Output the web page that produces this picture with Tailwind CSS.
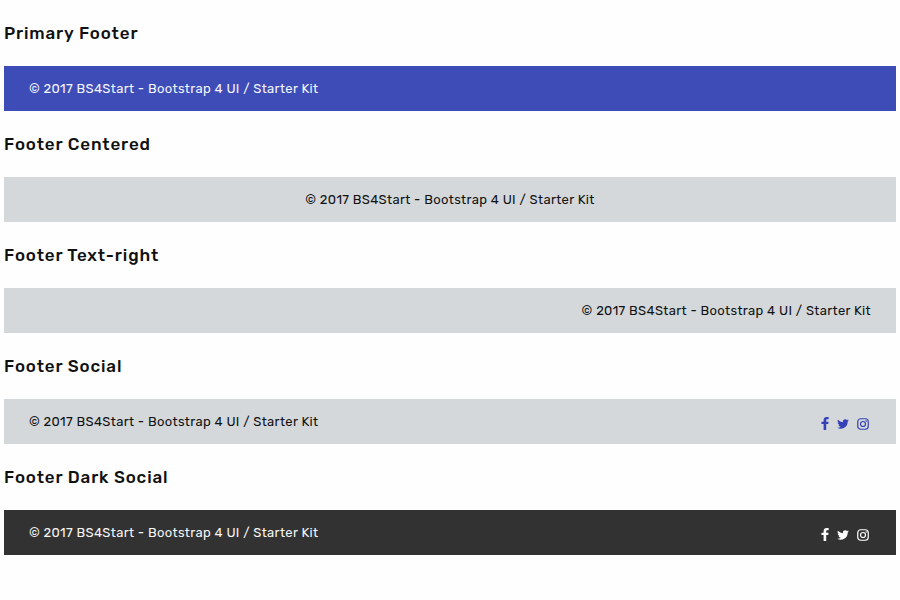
<!DOCTYPE html>
<html lang="en">
<head>
<meta charset="utf-8">
<meta name="viewport" content="width=device-width, initial-scale=1">
<title>Footers</title>
<script src="https://cdn.jsdelivr.net/npm/@tailwindcss/browser@4"></script>
</head>
<body class="bg-[#fefefe] font-['Rubik','Roboto',sans-serif] text-[13px] tracking-wide text-[#111214]">
<svg class="hidden" aria-hidden="true">
  <symbol id="facebook" viewBox="0 0 8 14"><path d="M7.900.1v2.300H6.500C5.500 2.400 5.300 2.900 5.300 3.600V5h2.500l-.3 2.600H5.300V14H2.500V7.600H.2V5h2.300V3.200C2.500 1.100 3.800 0 5.800 0c1 0 1.800.1 2.100.1z"/></symbol>
  <symbol id="twitter" viewBox="0 0 24 20"><path d="M23.6 2.7c-.8.4-1.7.6-2.7.8 1-.6 1.7-1.5 2.1-2.6-.9.5-1.9.9-3 1.1A4.8 4.8 0 0 0 11.900 6.400 13.600 13.600 0 0 1 2 1.300a4.800 4.800 0 0 0 1.500 6.400c-.8 0-1.500-.2-2.200-.6 0 2.400 1.700 4.300 3.800 4.800-.7.200-1.400.2-2.100.1a4.800 4.800 0 0 0 4.500 3.300A9.600 9.600 0 0 1 .4 17.300 13.600 13.600 0 0 0 7.700 19.500c9.100 0 14-7.500 13.700-14.400.9-.6 1.600-1.400 2.200-2.400z"/></symbol>
  <symbol id="instagram" viewBox="0 0 24 24"><rect x="1.500" y="1.500" width="21" height="21" rx="6" fill="none" stroke="currentColor" stroke-width="2.400"/><circle cx="12" cy="12" r="5" fill="none" stroke="currentColor" stroke-width="2.400"/><circle cx="18.200" cy="5.800" r="1.500"/></symbol>
</svg>
<main class="px-1 pt-5">
  <section class="mb-5">
    <h2 class="mb-5 text-[17px] leading-[26px] font-medium tracking-wider text-[#111]">Primary Footer</h2>
    <footer class="bg-[#3e4cb8] px-[25px] py-3 leading-[21px] text-[#f4f5fc]"><p>© 2017 BS4Start - Bootstrap 4 UI / Starter Kit</p></footer>
  </section>
  <section class="mb-5">
    <h2 class="mb-5 text-[17px] leading-[26px] font-medium tracking-wider text-[#111]">Footer Centered</h2>
    <footer class="bg-[#d4d8da] px-[25px] py-3 text-center leading-[21px]"><p>© 2017 BS4Start - Bootstrap 4 UI / Starter Kit</p></footer>
  </section>
  <section class="mb-5">
    <h2 class="mb-5 text-[17px] leading-[26px] font-medium tracking-wider text-[#111]">Footer Text-right</h2>
    <footer class="bg-[#d4d8da] px-[25px] py-3 text-right leading-[21px]"><p>© 2017 BS4Start - Bootstrap 4 UI / Starter Kit</p></footer>
  </section>
  <section class="mb-5">
    <h2 class="mb-5 text-[17px] leading-[26px] font-medium tracking-wider text-[#111]">Footer Social</h2>
    <footer class="flex items-center justify-between bg-[#d4d8da] px-[25px] py-3 leading-[21px]">
      <p>© 2017 BS4Start - Bootstrap 4 UI / Starter Kit</p>
      <nav class="flex items-center gap-2 pt-1 pr-0.5 text-[#3541b8]" aria-label="Social links">
        <a href="#" aria-label="Facebook"><svg class="block h-[13px] w-2 fill-current"><use href="#facebook"/></svg></a>
        <a href="#" aria-label="Twitter"><svg class="block h-3 w-3 fill-current"><use href="#twitter"/></svg></a>
        <a href="#" aria-label="Instagram"><svg class="block h-3 w-3 fill-current"><use href="#instagram"/></svg></a>
      </nav>
    </footer>
  </section>
  <section>
    <h2 class="mb-5 text-[17px] leading-[26px] font-medium tracking-wider text-[#111]">Footer Dark Social</h2>
    <footer class="flex items-center justify-between bg-[#323232] px-[25px] py-3 leading-[21px] text-[#f5f5f5]">
      <p>© 2017 BS4Start - Bootstrap 4 UI / Starter Kit</p>
      <nav class="flex items-center gap-2 pt-1 pr-0.5 text-white" aria-label="Social links">
        <a href="#" aria-label="Facebook"><svg class="block h-[13px] w-2 fill-current"><use href="#facebook"/></svg></a>
        <a href="#" aria-label="Twitter"><svg class="block h-3 w-3 fill-current"><use href="#twitter"/></svg></a>
        <a href="#" aria-label="Instagram"><svg class="block h-3 w-3 fill-current"><use href="#instagram"/></svg></a>
      </nav>
    </footer>
  </section>
</main>
</body>
</html>
